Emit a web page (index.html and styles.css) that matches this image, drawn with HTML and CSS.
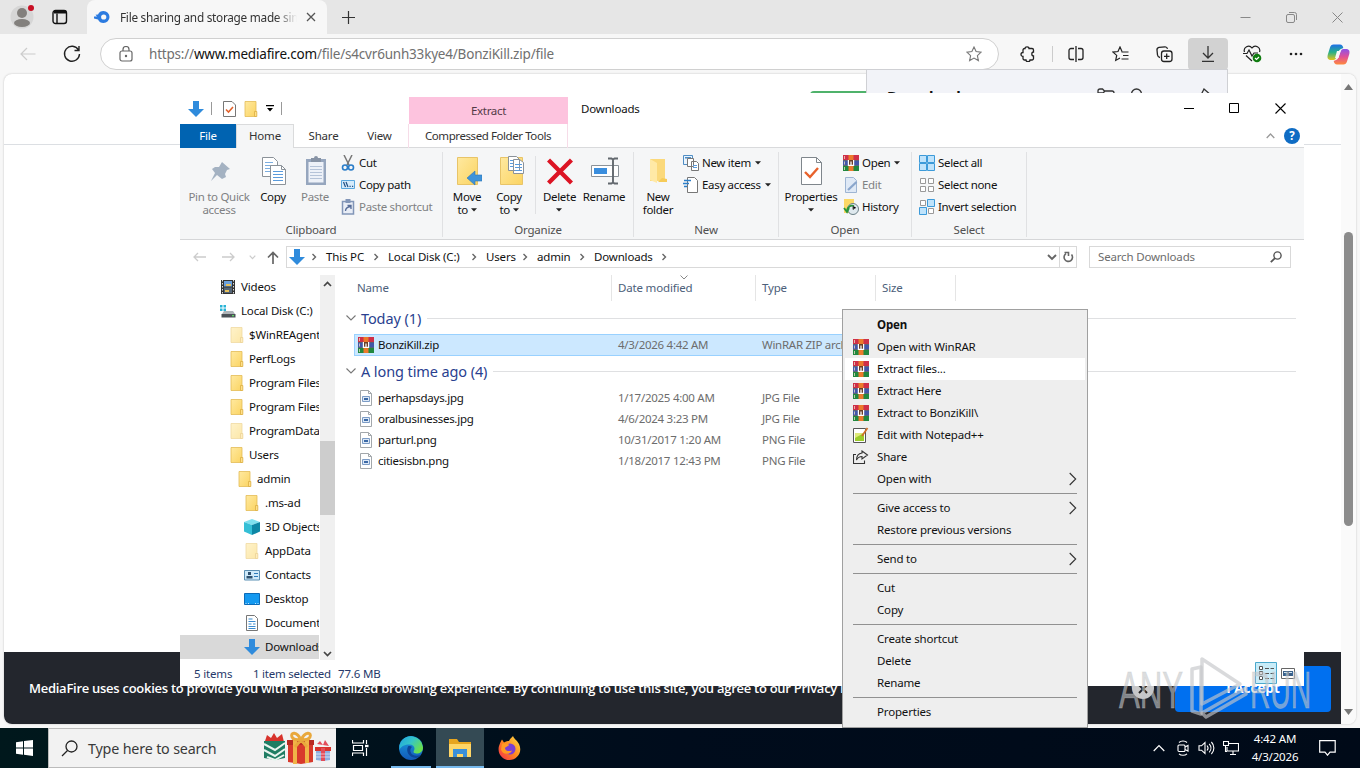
FILE: index.html
```
<!DOCTYPE html>
<html lang="en">
<head>
  <meta charset="UTF-8" />
  <meta name="viewport" content="width=device-width, initial-scale=1.0"/>
  <title>Downloads</title>
  <link rel="stylesheet" href="styles.css">
</head>
<body>

  <!-- shared icons -->
  <svg class="defs">
    <defs>
      <linearGradient id="gold" x1="0" y1="0" x2="1" y2="1"><stop offset="0" stop-color="#ffe9a0"/><stop offset="1" stop-color="#fbd462"/></linearGradient>
      <linearGradient id="edge1" x1="0" y1="0" x2="1" y2=".6"><stop offset="0" stop-color="#1fa3e0"/><stop offset=".5" stop-color="#35c5c8"/><stop offset="1" stop-color="#6be04a"/></linearGradient>
      <linearGradient id="edge2" x1="0" y1="0" x2="0" y2="1"><stop offset="0" stop-color="#1b9fe0"/><stop offset="1" stop-color="#1259b8"/></linearGradient>
      <linearGradient id="fox" x1="1" y1="0" x2="0" y2="1"><stop offset="0" stop-color="#ffe14a"/><stop offset=".5" stop-color="#ff8a1e"/><stop offset="1" stop-color="#f2274f"/></linearGradient>
      <linearGradient id="cop1" x1="0" y1="0" x2="0" y2="1"><stop offset="0" stop-color="#1d6fe8"/><stop offset=".5" stop-color="#27b089"/><stop offset="1" stop-color="#e5c41b"/></linearGradient>
      <linearGradient id="cop2" x1="0" y1="0" x2="0" y2="1"><stop offset="0" stop-color="#8c52e8"/><stop offset=".5" stop-color="#e05098"/><stop offset="1" stop-color="#ff8a3c"/></linearGradient>
    </defs>
    <symbol id="rar" viewBox="0 0 16 16">
      <path fill="#cf2f48" d="M0 0h16v5H0z"/><path fill="#4256a8" d="M0 5.500h16v5H0z"/><path fill="#21883f" d="M0 11h16v5H0z"/>
      <path fill="#222" d="M0 4.900h16v.6H0zM0 10.400h16v.6H0z"/>
      <path fill="#ec7a2c" d="M5.500 0h5v16h-5z"/><path fill="#6b3f28" d="M5 5h6v6H5z"/>
      <path fill="none" stroke="#fff" stroke-width="1.200" d="M5.400 5v5.300h5.200V5M8 6.500v3.500"/>
      <path stroke="#e9d8c0" d="M1.500 1v3M1.500 6.500v3M1.500 12v3" opacity=".8"/>
    </symbol>
    <symbol id="folder" viewBox="0 0 16 16">
      <path fill="url(#gold)" stroke="#e3bb55" stroke-width=".8" d="M2 .5h11v15H2z"/><path fill="#ffe08a" stroke="#dcae42" stroke-width=".8" d="M11.500 10.500h2.300v5h-2.300z"/>
    </symbol>
    <symbol id="down" viewBox="0 0 16 16"><path fill="#2f8bdc" d="M5 0h6v8h5l-8 8-8-8h5z"/></symbol>
    <symbol id="pic" viewBox="0 0 16 16">
      <path fill="#fff" stroke="#a2a7ab" d="M2.500.5h8l3 3v12h-11z"/><path fill="none" stroke="#a2a7ab" d="M10.500.5v3h3"/>
      <path fill="#dce8f6" stroke="#7c9cc6" d="M4.500 6.500h7v5h-7z"/><path fill="#3b69a6" d="M6 8h4v2H6z"/>
    </symbol>
    <symbol id="crumb" viewBox="0 0 6 8"><path fill="none" stroke="#666" stroke-width="1.400" d="M1.500 1l3 3-3 3"/></symbol>
    <symbol id="drop" viewBox="0 0 6 4"><path fill="#222" d="M0 .3h6L3 3.600z"/></symbol>
    <symbol id="more" viewBox="0 0 8 14"><path fill="none" stroke="#333" stroke-width="1.100" d="M.7 1l6 6-6 6"/></symbol>
  </svg>

  <div class="browser">
    <div class="tabstrip">
      <svg class="avatar" width="24" height="24" viewBox="0 0 24 24"><circle cx="12" cy="12" r="11.500" fill="#d6d6d6"/><circle cx="12" cy="8" r="5" fill="#83807d"/><ellipse cx="12" cy="18" rx="8" ry="4" fill="#83807d"/><circle cx="21" cy="3" r="3" fill="#c80f24"/></svg>
      <svg width="16" height="16" viewBox="0 0 16 16" fill="none" stroke="#111" stroke-width="1.400"><rect x="1" y="1.500" width="13.500" height="13" rx="2.500"/><path d="M5 4.500v10" /><path d="M2 3h12" stroke-width="3"/></svg>
      <div class="tab">
        <svg width="16" height="14" viewBox="0 0 16 14"><path fill="#2c7be0" d="M0 6.500h3L1.500 4.800 4 4.500C5 2 7 1 9.500 1a6 6 0 0 1 0 12C7 13 5 12 4 9.500L0 8.500z"/><circle cx="9.700" cy="7" r="2.600" fill="#f7f7f7"/></svg>
        <span class="tab-title">File sharing and storage made simple</span>
        <svg width="10" height="10" viewBox="0 0 10 10" stroke="#555" stroke-width="1.300"><path d="M1 1l8 8M9 1L1 9"/></svg>
      </div>
      <svg class="new-tab" width="15" height="15" viewBox="0 0 15 15" stroke="#333" stroke-width="1.200"><path d="M7.500 1v13M1 7.500h13"/></svg>
      <div class="win-buttons">
        <svg width="11" height="11" viewBox="0 0 11 11" stroke="#888"><path d="M.5 5.500h10"/></svg>
        <svg width="11" height="11" viewBox="0 0 11 11" fill="none" stroke="#888"><rect x=".5" y="2.500" width="8" height="8" rx="1.500"/><path d="M3 .5h5.500a2 2 0 0 1 2 2V8"/></svg>
        <svg width="11" height="11" viewBox="0 0 11 11" stroke="#888"><path d="M.5.5l10 10M10.500.5l-10 10"/></svg>
      </div>
    </div>

    <div class="toolbar">
      <svg class="back" width="16" height="14" viewBox="0 0 16 14" fill="none" stroke="#ccc" stroke-width="1.200"><path d="M15.500 7H1M7 1L1 7l6 6"/></svg>
      <svg class="reload" width="18" height="18" viewBox="0 0 18 18" fill="none" stroke="#222" stroke-width="1.400"><path d="M15.500 5A7.500 7.500 0 1 0 16.500 9M16 1v4.500h-4.500"/></svg>
      <div class="url">
        <svg width="14" height="16" viewBox="0 0 14 16" fill="none" stroke="#666" stroke-width="1.200"><rect x="1" y="5" width="12" height="10" rx="2"/><path d="M4 5V3.500a3 3 0 0 1 6 0V5"/><circle cx="7" cy="10" r=".6" fill="#666"/></svg>
        <span class="url-text">https://<b>www.mediafire.com</b>/file/s4cvr6unh33kye4/BonziKill.zip/file</span>
        <svg width="16" height="16" viewBox="0 0 16 16" fill="none" stroke="#777" stroke-width="1.100"><path d="M8 1l2.100 4.600 5 .6-3.700 3.400 1 5L8 12.100l-4.400 2.500 1-5L.9 6.200l5-.6z"/></svg>
      </div>
      <div class="tools">
        <span class="tool"><svg width="16" height="16" viewBox="0 0 16 16" fill="none" stroke="#222" stroke-width="1.300"><path d="M5 2.500a2 1.700 0 0 1 4 0h3a1.500 1.500 0 0 1 1.500 1.500v2a1.500 1.800 0 0 0 0 4v2.500a1.500 1.500 0 0 1-1.500 1.500H10a2 1.700 0 0 1-4 0H4.500A1.500 1.500 0 0 1 3 12.500v-2a2 2 0 0 1 0-4V4a1.500 1.500 0 0 1 1.500-1.500z"/></svg></span>
        <span class="tool-line"></span>
        <span class="tool"><svg width="16" height="16" viewBox="0 0 16 16" fill="none" stroke="#222" stroke-width="1.300"><path d="M6 2.500H3a2 2 0 0 0-2 2v7a2 2 0 0 0 2 2h3M10 2.500h3a2 2 0 0 1 2 2v7a2 2 0 0 1-2 2h-3M8 0v16"/></svg></span>
        <span class="tool"><svg width="17" height="16" viewBox="0 0 17 16" fill="none" stroke="#222" stroke-width="1.200"><path d="M10 5.500L8 1 6 5.500l-5 .6 3.700 3.300-1 5 4.300-2.500M9.500 6h7M11 9.500h5.500M9.500 13h7"/></svg></span>
        <span class="tool"><svg width="17" height="17" viewBox="0 0 17 17" fill="none" stroke="#222" stroke-width="1.300"><path d="M4 11.500A3 3 0 0 1 1.500 9L1 4a2.500 2.500 0 0 1 2-2.700L9 .8a2.500 2.500 0 0 1 2.500 2"/><rect x="5.500" y="5" width="10.500" height="10.500" rx="2.500"/><path d="M10.700 7.500v5.500M8 10.300h5.500"/></svg></span>
        <span class="tool active"><svg width="14" height="16" viewBox="0 0 14 16" fill="none" stroke="#333" stroke-width="1.300"><path d="M7 0v12M2 7l5 5 5-5M1 15.300h12"/></svg></span>
        <span class="tool"><svg width="19" height="18" viewBox="0 0 19 18" fill="none" stroke="#222" stroke-width="1.200"><path d="M1.500 7A4.300 4.300 0 0 1 9 3a4.300 4.300 0 0 1 7.500 4M0 8.500h4l2-3.500 3 6 2-3h4M3 10.500l6 5.500"/><circle cx="14" cy="13" r="4.300" fill="#107c10" stroke="none"/><path stroke="#fff" d="M12 13l1.500 1.500L16 12"/></svg></span>
        <span class="tool"><svg width="14" height="4" viewBox="0 0 14 4" fill="#222"><circle cx="2" cy="2" r="1.300"/><circle cx="7" cy="2" r="1.300"/><circle cx="12" cy="2" r="1.300"/></svg></span>
        <span class="tool copilot"><svg width="23" height="21" viewBox="0 0 23 21"><path fill="url(#cop2)" d="M16.500 20.500H10c-2 0-2.800-1.500-3.300-3.500l2.300-1c1.500-.5 2-1.500 2.500-3L13.500 8c.6-2 1.500-3 3-3h2c3.500 0 4.500 1.500 3.800 5l-2.300 7.500c-.6 2-1.700 3-3.500 3z"/><path fill="url(#cop1)" d="M6.500.5H13c2 0 2.800 1.500 3.300 3.500L14 5c-1.500.5-2 1.500-2.500 3l-2 5c-.6 2-1.500 3-3 3h-2C1 16 0 14.500.7 11L3 3.500c.6-2 1.700-3 3.500-3z"/><path fill="#f7f7f7" d="M10 7h3.500l-2 7H8z"/></svg></span>
      </div>
    </div>

    <div class="page">
      <div class="site">
        <div class="site-header"><div class="green-button"></div></div>
        <div class="site-body"></div>
        <div class="cookies">
          <p>MediaFire uses cookies to provide you with a personalized browsing experience. By continuing to use this site, you agree to our Privacy Policy.</p>
          <svg class="cookie-close" width="22" height="22" viewBox="0 0 22 22"><circle cx="11" cy="11" r="11" fill="#c9c9c9"/><path stroke="#222" stroke-width="2" d="M7 8l8 8M15 8l-8 8"/></svg>
          <span class="accept">I Accept</span>
        </div>
      </div>
      <div class="page-scroll">
        <svg width="9" height="6" viewBox="0 0 9 6"><path fill="#777" d="M4.500 0L9 6H0z"/></svg>
        <div class="page-thumb"></div>
        <svg width="9" height="6" viewBox="0 0 9 6"><path fill="#777" d="M4.500 6L9 0H0z"/></svg>
      </div>
    </div>
    <div class="flyout">
      <b>Downloads</b>
      <svg width="18" height="14" viewBox="0 0 18 14" fill="none" stroke="#333" stroke-width="1.300"><path d="M1 12V3a2 2 0 0 1 2-2h2.500L7.500 3H15a2 2 0 0 1 2 2M1 5h5l2-2"/></svg>
      <svg width="14" height="14" viewBox="0 0 14 14" fill="none" stroke="#333" stroke-width="1.300"><circle cx="6.500" cy="6" r="5"/><path d="M10 10l4 4"/></svg>
      <svg class="pin" width="14" height="14" viewBox="0 0 14 14" fill="none" stroke="#333" stroke-width="1.300"><path d="M2 7l3-6 8 7-4 4z"/></svg>
    </div>
  </div>

  <div class="taskbar">
    <div class="start"><svg width="17" height="16" viewBox="0 0 17 16" fill="#fff"><path d="M0 2.300l7-1v6.200H0zM8 1.100L17 0v7.500H8zM0 8.500h7v6.200l-7-1zM8 8.500h9V16l-9-1.200z"/></svg></div>
    <div class="task-search">
      <svg width="17" height="17" viewBox="0 0 17 17" fill="none" stroke="#222" stroke-width="1.300"><circle cx="10.500" cy="6.500" r="5.500"/><path d="M6.500 10.500L1 16"/></svg>
      <span>Type here to search</span>
      <svg class="gifts" width="68" height="34" viewBox="0 0 68 34">
        <path fill="#d8332c" d="M2 10l2-6 4 3 3-5 3 5 5-4 2 8z"/><path fill="#1f7d63" d="M1 10h21v17l-10 2-11-2z"/><path fill="none" stroke="#e9f4ef" stroke-width="2" d="M1 13l11 6 10-7M1 19l11 6 10-7M4 26l8 3 9-5"/>
        <path fill="#d8392c" d="M25 13h25v18l-12 2-13-2z"/><path fill="#b82a22" d="M24 9h27v5H24z"/><path fill="#f0b347" d="M30 9h4v24h-4zM42 9h4v23h-4z"/><path fill="none" stroke="#e9a83c" stroke-width="3" d="M38 9c-4-9-11-8-9-3 1 3 5 3 9 3 4-9 11-8 9-3-1 3-5 3-9 3l-6 7M38 9l6 7"/>
        <path fill="#8eaee0" d="M53 19h14v10l-7 1-7-1z"/><path fill="#d8332c" d="M52 16h16v4H52z"/><path fill="#e34d5a" d="M54 13l3-3 3 4 2-5 4 6zM58 17h4v13h-4z"/><path stroke="#fff" d="M53 23h14M53 26h14" opacity=".6"/>
      </svg>
    </div>
    <div class="task-item"><svg width="17" height="16" viewBox="0 0 17 16" fill="none" stroke="#fff" stroke-width="1.200"><path d="M.5 0v3h11V0M.5 16v-3h11v3M1.500 5.500h9v5h-9zM14.500 0v4M14.500 8v8"/><path d="M13 6h3.500" stroke-width="2.400"/></svg></div>
    <div class="task-item running edge"><svg width="24" height="24" viewBox="0 0 24 24"><circle cx="12" cy="12" r="12" fill="url(#edge2)"/><path fill="url(#edge1)" d="M.5 9A12 12 0 0 1 24 11.500c0 4-3 6-6.500 6-3 0-3.500-1.500-2.500-3 1.500-3-.5-6-4.500-6C6 8.500 2 10 .5 14z"/><path fill="#0d4597" d="M9 10.500c-2.500 5 1 11 8 11.500 2-.3 3.500-1.500 4.500-3-4 1.500-9 1-10-3.500-.4-2 .3-3.500 1.500-4.500-1-1-3-1.300-4-.5z"/></svg></div>
    <div class="task-item running open"><svg width="22" height="20" viewBox="0 0 22 20"><path fill="#e8a51e" d="M0 1h8l2 3h12v15H0z"/><path fill="#ffd667" d="M0 6h22v13H0z"/><path fill="#3b8fd8" d="M4 19v-8h14v8h-4v-3H8v3z"/></svg></div>
    <div class="task-item"><svg width="23" height="24" viewBox="0 0 23 24"><path fill="url(#fox)" d="M1 10C2 7 3 5 4 3.500l2 3C8 5 10 5 11 5c1-2 2.500-3.500 4-5 1 3 4 4 6 8 4 8-2 16-9.500 16S-1 17 1 10z"/><circle cx="12" cy="13" r="5.500" fill="#7a3fd4"/><path fill="#ff9a22" d="M4 8c3-2 5 0 7 .5 0 2-4 2-4 4 1 3 4 3 7 2-2 5-10 4-11-1z"/></svg></div>
    <div class="tray">
      <svg width="12" height="8" viewBox="0 0 12 8" fill="none" stroke="#fff" stroke-width="1.200"><path d="M.7 7L6 1.500 11.300 7"/></svg>
      <svg width="12" height="16" viewBox="0 0 12 16" fill="none" stroke="#fff" stroke-width="1.100"><rect x="1" y="5" width="7" height="6.500" rx="1"/><path d="M8 7l3-1.500v5.500L8 9.500M2 2.500C4 .5 8 .5 10 2.500M2 13.800c2 2 6 2 8 0"/></svg>
      <svg width="17" height="14" viewBox="0 0 17 14" fill="none" stroke="#fff" stroke-width="1.100"><path d="M1 4.800h2.500L7 1.500v11L3.500 9.200H1zM9 4.500c1.300 1.500 1.300 3.500 0 5M11.200 2.800c2.300 2.500 2.300 6 0 8.500M13.400 1c3.300 3.500 3.300 8.500 0 12"/></svg>
      <svg width="16" height="14" viewBox="0 0 16 14" fill="none" stroke="#fff" stroke-width="1.100"><path d="M6 2.500h9.500v7.500H4V6M7 13.500h6M10 10v3.500M.5.500h5v4h-5zM2.500 5v5.500H4"/></svg>
    </div>
    <div class="clock"><span>4:42 AM</span><span>4/3/2026</span></div>
    <svg class="notify" width="17" height="16" viewBox="0 0 17 16" fill="none" stroke="#fff" stroke-width="1.200"><path d="M.7.7h15.500v11.500H11l-2.500 3-2.500-3H.7z"/></svg>
  </div>

  <div class="explorer">
    <div class="titlebar">
      <div class="quick">
        <svg width="16" height="16"><use href="#down"/></svg>
        <i></i>
        <svg class="q-check" width="13" height="16" viewBox="0 0 13 16"><path fill="#fff" stroke="#777" d="M.5.5H9L12.500 4v11.500H.5z"/><path fill="none" stroke="#e2622c" stroke-width="1.600" d="M3 8.500L5.500 11 10 6"/></svg>
        <svg width="16" height="16"><use href="#folder"/></svg>
        <svg class="q-drop" width="8" height="7" viewBox="0 0 8 7"><path d="M0 0h8v1.200H0zM1 3h6L4 6.500z"/></svg>
        <i></i>
      </div>
      <div class="extract">Extract</div>
      <div class="title">Downloads</div>
      <div class="caption">
        <svg width="11" height="11" viewBox="0 0 11 11" stroke="#000"><path d="M0 5.500h10"/></svg>
        <svg width="11" height="11" viewBox="0 0 11 11" stroke="#000" fill="none"><path d="M.5.5h9v9h-9z"/></svg>
        <svg width="11" height="11" viewBox="0 0 11 11" stroke="#000" stroke-width="1.100"><path d="M.5.500l10 10M10.500.5l-10 10"/></svg>
      </div>
    </div>

    <div class="ribbon-tabs">
      <span class="rtab file">File</span>
      <span class="rtab home">Home</span>
      <span class="rtab share">Share</span>
      <span class="rtab view">View</span>
      <span class="rtab tools-tab">Compressed Folder Tools</span>
      <svg class="collapse" width="9" height="6" viewBox="0 0 9 6" fill="none" stroke="#999" stroke-width="1.300"><path d="M.7 5l3.800-4 3.800 4"/></svg>
      <span class="help">?</span>
    </div>

    <div class="ribbon">
      <div class="group clipboard">
        <div class="group-body">
          <div class="big off pin-btn">
            <svg width="26" height="30" viewBox="0 0 26 30"><path fill="#a4b2c2" d="M15 6l8 7-3 1-2 4 1 3-4 2-5-4-6 6 4-8-3-4 3-2 4 0z"/></svg>
            <span>Pin to Quick<br>access</span>
          </div>
          <div class="big copy-btn">
            <svg width="26" height="30" viewBox="0 0 26 30"><path fill="#fff" stroke="#8b9299" d="M1.500 1.500h11l4 4v15h-15z"/><path stroke="#7caee0" d="M4 6.500h8M4 9.500h8M4 12.500h8M4 15.500h8"/><path fill="#fff" stroke="#8b9299" d="M9.500 9.500h11l4 4v15h-15z"/><path fill="none" stroke="#8b9299" d="M20.500 9.500v4h4"/><path stroke="#5a9bdc" d="M12 15.500h10M12 18.500h10M12 21.500h10M12 24.500h10"/></svg>
            <span>Copy</span>
          </div>
          <div class="big off paste-btn">
            <svg width="22" height="30" viewBox="0 0 22 30"><path fill="#96a6be" d="M1 3h20v26H1z"/><path fill="#edf1f8" d="M3.500 6h15v20.500h-15z"/><path fill="#8793a5" d="M6 2h3a2 2 0 0 1 4 0h3v4H6z"/><path stroke="#b5c3d8" d="M5 10.500h12M5 13.500h12M5 16.500h12M5 19.500h12M5 22.500h12"/></svg>
            <span>Paste</span>
          </div>
          <div class="smalls">
            <div class="small"><svg width="14" height="16" viewBox="0 0 14 16" fill="none"><path stroke="#777" stroke-width="1.500" d="M3 0l5 10M11 0L6 10"/><circle cx="4" cy="12.500" r="2.500" stroke="#2a7dc8" stroke-width="1.600"/><circle cx="10" cy="12.500" r="2.500" stroke="#2a7dc8" stroke-width="1.600"/></svg><span>Cut</span></div>
            <div class="small"><svg width="14" height="16" viewBox="0 0 14 16"><path fill="#d5ebfb" stroke="#5aa7de" d="M.5 3.500h13v8H.5z"/><path stroke="#1f4e84" stroke-width="1.200" d="M2.500 5l2 5M5 5l2 5M8.500 9.400h1.200M11 9.400h1.200"/></svg><span>Copy path</span></div>
            <div class="small off"><svg width="14" height="16" viewBox="0 0 14 16"><path fill="#e8edf6" stroke="#8296b8" stroke-width="1.500" d="M1.500 2.500h11v12.500h-11z"/><path fill="#8296b8" d="M4.500 0h5v4h-5z"/><path fill="none" stroke="#566c98" stroke-width="1.300" d="M4.500 12c0-3 2-4 5-4.500M6.500 6.500h3.500V10"/></svg><span>Paste shortcut</span></div>
          </div>
        </div>
        <div class="group-name">Clipboard</div>
      </div>

      <div class="group organize">
        <div class="group-body">
          <div class="big move-btn">
            <svg width="28" height="30" viewBox="0 0 28 30"><path fill="url(#gold)" stroke="#e8c468" d="M3.500 1.500h20v27h-20z"/><path fill="#3f93d9" stroke="#2c76b8" stroke-width=".6" d="M13 22l8-7v4h7v6h-7v4z"/></svg>
            <span>Move<br>to <svg width="6" height="4"><use href="#drop"/></svg></span>
          </div>
          <div class="big move-btn">
            <svg width="28" height="30" viewBox="0 0 28 30"><path fill="url(#gold)" stroke="#e8c468" d="M4.500 1.500h22v27h-22z"/><path fill="#fff" stroke="#8b9299" d="M12.500.5h8l3 3v11h-11zM17.500 3.500h6l4 3v11h-10z"/><path stroke="#5a9bdc" d="M19 8.500h7M19 11.500h7M19 14.500h7M14 4.500h3M14 7.500h3M14 10.500h3"/></svg>
            <span>Copy<br>to <svg width="6" height="4"><use href="#drop"/></svg></span>
          </div>
          <i class="inner-line"></i>
          <div class="big delete-btn">
            <svg width="26" height="30" viewBox="0 0 26 30"><path stroke="#dc1424" stroke-width="4.400" d="M1.500 4l23 23M24.500 4l-23 23"/></svg>
            <span>Delete<br><svg width="6" height="4"><use href="#drop"/></svg></span>
          </div>
          <div class="big rename-btn">
            <svg width="30" height="30" viewBox="0 0 30 30"><path fill="#fff" stroke="#8b9299" d="M1.500 9.500h27v11h-27z"/><path fill="#3a8ede" d="M4 12h13v6H4z"/><path fill="none" stroke="#62686e" stroke-width="1.900" d="M18 2.500h3.500l1.500 1 1.500-1H28M18 27.500h3.500l1.500-1 1.500 1H28M23 3v24"/></svg>
            <span>Rename</span>
          </div>
        </div>
        <div class="group-name">Organize</div>
      </div>

      <div class="group new">
        <div class="group-body">
          <div class="big move-btn">
            <svg width="22" height="30" viewBox="0 0 22 30"><path fill="#fbd97b" d="M2 3h15v22H2z"/><path fill="#ffe9a6" d="M2 3l7 4v20l-7-3z"/><path fill="#f6cb58" d="M14 22l5 1v3h-9z"/></svg>
            <span>New<br>folder</span>
          </div>
          <div class="smalls">
            <div class="small"><svg width="16" height="16" viewBox="0 0 16 16"><path fill="#eaf4fd" stroke="#4f8dc4" d="M.5.5h9v9h-9z"/><path fill="#4f8dc4" d="M2 2h6v1.500H2z"/><path fill="#fff" stroke="#777" d="M4.500 3.500h6v8h-6zM8.500 6.500h5l2 2v7h-7z"/><path stroke="#5a9bdc" d="M10 10.500h4M10 12.500h4"/></svg><span>New item</span><svg class="arrow" width="6" height="4"><use href="#drop"/></svg></div>
            <div class="small"><svg width="16" height="16" viewBox="0 0 16 16"><path fill="#fff" stroke="#777" d="M4.500.5h7l3 3v12h-10z"/><path stroke="#2c7fc9" stroke-width="1.300" d="M1 3.500h7M0 6.500h6M1 9.500h3"/></svg><span>Easy access</span><svg class="arrow" width="6" height="4"><use href="#drop"/></svg></div>
          </div>
        </div>
        <div class="group-name">New</div>
      </div>

      <div class="group opening">
        <div class="group-body">
          <div class="big prop-btn">
            <svg width="22" height="30" viewBox="0 0 22 30"><path fill="#fff" stroke="#7f868c" d="M.5 1.500h15l5 5v22H.5z"/><path fill="none" stroke="#7f868c" d="M15.500 1.500v5h5"/><path fill="none" stroke="#e8622c" stroke-width="2.400" d="M4 16l5 5 8-9"/></svg>
            <span>Properties<br><svg width="6" height="4"><use href="#drop"/></svg></span>
          </div>
          <div class="smalls">
            <div class="small"><svg width="16" height="16"><use href="#rar"/></svg><span>Open</span><svg class="arrow" width="6" height="4"><use href="#drop"/></svg></div>
            <div class="small off"><svg width="16" height="16" viewBox="0 0 16 16"><path fill="#dfe9f6" stroke="#9eb5d3" d="M2.500.5h8l3 3v12h-11z"/><path stroke="#8aa6cc" stroke-width="2.200" d="M5 13l8.500-8"/></svg><span>Edit</span></div>
            <div class="small"><svg width="16" height="16" viewBox="0 0 16 16"><path fill="#fbd866" d="M1 0h10v14H1z"/><circle cx="10" cy="10" r="5.500" fill="#dfe9ee" stroke="#6a7f86"/><path fill="none" stroke="#28953a" stroke-width="1.800" d="M1 9l3 4 2-4M4 12c1-5 4-6 7-5"/><path stroke="#555" d="M10 7v3.500l3-2"/></svg><span>History</span></div>
          </div>
        </div>
        <div class="group-name">Open</div>
      </div>

      <div class="group selecting">
        <div class="group-body">
          <div class="smalls">
            <div class="small"><svg width="16" height="16" viewBox="0 0 16 16" fill="#bfe3fb" stroke="#3c9ad9"><path d="M.5.5h7v7h-7zM8.500.5h7v7h-7zM.5 8.500h7v7h-7zM8.500 8.500h7v7h-7z"/></svg><span>Select all</span></div>
            <div class="small"><svg width="16" height="16" viewBox="0 0 16 16" fill="#fff" stroke="#999"><path d="M1.500 1.500h5v5h-5zM9.500 1.500h5v5h-5zM1.500 9.500h5v5h-5zM9.500 9.500h5v5h-5z"/></svg><span>Select none</span></div>
            <div class="small"><svg width="16" height="16" viewBox="0 0 16 16"><path fill="#fff" stroke="#999" d="M1.500 1.500h5v5h-5zM9.500 9.500h5v5h-5z"/><path fill="#bfe3fb" stroke="#3c9ad9" d="M8.500.5h7v7h-7zM.5 8.500h7v7h-7z"/></svg><span>Invert selection</span></div>
          </div>
        </div>
        <div class="group-name">Select</div>
      </div>
    </div>

    <div class="address-row">
      <div class="nav-arrows">
        <svg width="13" height="10" viewBox="0 0 13 10" fill="none" stroke="#ccc" stroke-width="1.300"><path d="M13 5H1M5 1L1 5l4 4"/></svg>
        <svg width="13" height="10" viewBox="0 0 13 10" fill="none" stroke="#ccc" stroke-width="1.300"><path d="M0 5h12M8 1l4 4-4 4"/></svg>
        <svg width="7" height="5" viewBox="0 0 7 5" fill="none" stroke="#ccc" stroke-width="1.200"><path d="M.7.7l2.800 3L6.300.7"/></svg>
        <svg width="12" height="13" viewBox="0 0 12 13" fill="none" stroke="#666" stroke-width="1.700"><path d="M6 13V1.500M1 6.500l5-5 5 5"/></svg>
      </div>
      <div class="address">
        <svg class="addr-icon" width="16" height="16"><use href="#down"/></svg>
        <svg width="6" height="8"><use href="#crumb"/></svg><span class="c1">This PC</span>
        <svg width="6" height="8"><use href="#crumb"/></svg><span class="c2">Local Disk (C:)</span>
        <svg width="6" height="8"><use href="#crumb"/></svg><span class="c3">Users</span>
        <svg width="6" height="8"><use href="#crumb"/></svg><span class="c4">admin</span>
        <svg width="6" height="8"><use href="#crumb"/></svg><span class="c5">Downloads</span>
        <svg width="6" height="8"><use href="#crumb"/></svg>
        <svg class="addr-drop" width="10" height="7" viewBox="0 0 10 7" fill="none" stroke="#666" stroke-width="1.900"><path d="M1 1l4 4 4-4"/></svg>
        <div class="refresh"><svg width="11" height="12" viewBox="0 0 11 12" fill="none" stroke="#666" stroke-width="1.600"><path d="M3 2.700A4.200 4.200 0 1 0 8.500 3.500M1.500 1.500h4V5"/></svg></div>
      </div>
      <div class="search"><span>Search Downloads</span><svg width="12" height="12" viewBox="0 0 12 12" fill="none" stroke="#555" stroke-width="1.400"><circle cx="7.500" cy="4.500" r="3.600"/><path d="M5 7.200L.8 11.200" stroke-width="1.800"/></svg></div>
    </div>

    <div class="content">
      <div class="tree">
        <div class="tree-list">
          <div class="node l1"><svg width="16" height="16" viewBox="0 0 16 16"><path fill="#333" d="M1 1h14v14H1z"/><path fill="#6ba0dc" d="M4 2h8v5.500H4z"/><path fill="#567" d="M4 8.500h8V14H4z"/><path fill="#e7c05c" d="M6 5h5v2H6zM5 11h4v2H5z"/><path stroke="#ddd" stroke-dasharray="1.500 1.500" d="M2.500 1v14M13.500 1v14"/></svg><span>Videos</span></div>
          <div class="node l1"><svg width="16" height="16" viewBox="0 0 16 16"><path fill="#28b3d6" d="M0 2h2.500v2.500H0zM3.500 2H6v2.500H3.500zM0 5.500h2.500V8H0zM3.500 5.500H6V8H3.500z"/><path fill="#aeb4b8" d="M4 8h9l2 3H2z"/><path fill="#4b5257" d="M1.500 11h14v3.500h-14z"/><path fill="#6f6" d="M12 12.300h2v1h-2z"/></svg><span>Local Disk (C:)</span></div>
          <div class="node l2 faded"><svg width="16" height="16"><use href="#folder"/></svg><span>$WinREAgent</span></div>
          <div class="node l2"><svg width="16" height="16"><use href="#folder"/></svg><span>PerfLogs</span></div>
          <div class="node l2"><svg width="16" height="16"><use href="#folder"/></svg><span>Program Files</span></div>
          <div class="node l2"><svg width="16" height="16"><use href="#folder"/></svg><span>Program Files (x86)</span></div>
          <div class="node l2 faded"><svg width="16" height="16"><use href="#folder"/></svg><span>ProgramData</span></div>
          <div class="node l2"><svg width="16" height="16"><use href="#folder"/></svg><span>Users</span></div>
          <div class="node l3"><svg width="16" height="16"><use href="#folder"/></svg><span>admin</span></div>
          <div class="node l4"><svg width="16" height="16"><use href="#folder"/></svg><span>.ms-ad</span></div>
          <div class="node l4"><svg width="16" height="16" viewBox="0 0 16 16"><path fill="#7fe0ee" d="M8 0l8 3-8 3-8-3z"/><path fill="#35bfd6" d="M0 3l8 3v10l-8-3.500z"/><path fill="#0e87a5" d="M16 3L8 6v10l8-3.500z"/></svg><span>3D Objects</span></div>
          <div class="node l4 faded"><svg width="16" height="16"><use href="#folder"/></svg><span>AppData</span></div>
          <div class="node l4"><svg width="16" height="16" viewBox="0 0 16 16"><path fill="#cfeafa" stroke="#5b8fb3" d="M.5 3.500h15v9.500H.5z"/><path fill="#2f5270" d="M4 5h3v3H4zM2.500 9h6v2.500h-6z"/><path stroke="#2d7bbb" d="M10 6.500h4M10 9.500h4"/></svg><span>Contacts</span></div>
          <div class="node l4"><svg width="16" height="16" viewBox="0 0 16 16"><path fill="#1499f0" stroke="#0b6bb8" d="M.5 2.500h15v11H.5z"/><path stroke="#bfe3fb" stroke-dasharray="1 1.500" d="M1.500 12.500h4M11 12.500h4"/></svg><span>Desktop</span></div>
          <div class="node l4"><svg width="16" height="16" viewBox="0 0 16 16"><path fill="#fff" stroke="#777" d="M2.500.5h8l3 3v12h-11z"/><path stroke="#3b8bd0" stroke-width="1.200" d="M4.500 4h4M4.500 6.500h7M4.500 9h3M9 9h2.500M4.500 11.500h7M4.500 13.500h7"/></svg><span>Documents</span></div>
          <div class="node l4 current"><svg width="16" height="16"><use href="#down"/></svg><span>Downloads</span></div>
        </div>
        <div class="tree-scroll">
          <svg width="9" height="6" viewBox="0 0 9 6" fill="none" stroke="#444" stroke-width="1.700"><path d="M1 5l3.500-3.500L8 5"/></svg>
          <div class="tree-thumb"></div>
          <svg width="9" height="6" viewBox="0 0 9 6" fill="none" stroke="#444" stroke-width="1.700"><path d="M1 1l3.500 3.500L8 1"/></svg>
        </div>
      </div>

      <div class="files">
        <div class="columns">
          <span class="col name">Name</span>
          <span class="col date">Date modified<svg class="sort" width="8" height="5" viewBox="0 0 8 5" fill="none" stroke="#888"><path d="M.5.5L4 4 7.500.5"/></svg></span>
          <span class="col type">Type</span>
          <span class="col size">Size</span>
        </div>
        <div class="heading first"><svg width="10" height="6" viewBox="0 0 10 6" fill="none" stroke="#777" stroke-width="1.100"><path d="M.5.5L5 5 9.500.5"/></svg><span>Today (1)</span><hr></div>
        <div class="row selected"><svg width="16" height="16"><use href="#rar"/></svg><span class="fname">BonziKill.zip</span><span class="fdate">4/3/2026 4:42 AM</span><span class="ftype">WinRAR ZIP archive</span></div>
        <div class="heading second"><svg width="10" height="6" viewBox="0 0 10 6" fill="none" stroke="#777" stroke-width="1.100"><path d="M.5.5L5 5 9.500.5"/></svg><span>A long time ago (4)</span><hr></div>
        <div class="row"><svg width="16" height="16"><use href="#pic"/></svg><span class="fname">perhapsdays.jpg</span><span class="fdate">1/17/2025 4:00 AM</span><span class="ftype">JPG File</span></div>
        <div class="row"><svg width="16" height="16"><use href="#pic"/></svg><span class="fname">oralbusinesses.jpg</span><span class="fdate">4/6/2024 3:23 PM</span><span class="ftype">JPG File</span></div>
        <div class="row"><svg width="16" height="16"><use href="#pic"/></svg><span class="fname">parturl.png</span><span class="fdate">10/31/2017 1:20 AM</span><span class="ftype">PNG File</span></div>
        <div class="row"><svg width="16" height="16"><use href="#pic"/></svg><span class="fname">citiesisbn.png</span><span class="fdate">1/18/2017 12:43 PM</span><span class="ftype">PNG File</span></div>
      </div>
    </div>

    <div class="status">
      <span class="count">5 items</span><span class="picked">1 item selected</span><span>77.6 MB</span>
      <span class="view-modes">
        <svg width="22" height="22" viewBox="0 0 22 22"><path fill="#c9ecf8" stroke="#4aa8cc" d="M.5.5h21v21H.5z"/><path fill="#fff" stroke="#555" d="M4.500 4.500h3v3h-3zM4.500 9.500h3v3h-3zM4.500 14.500h3v3h-3z"/><path stroke="#555" stroke-dasharray="4 1.500" d="M10 6.500h9M10 11.500h9M10 16.500h9"/></svg>
        <svg width="14" height="11" viewBox="0 0 14 11"><path fill="#fff" stroke="#666" d="M.5.5h13v10H.5z"/><path fill="#3b5f86" d="M2 3h10v5H2z"/><path stroke="#cfe6f5" d="M3 4.500h3M8 4.500h3"/></svg>
      </span>
    </div>
  </div>

  <div class="menu">
    <div class="item bold"><span>Open</span></div>
    <div class="item"><svg width="16" height="16"><use href="#rar"/></svg><span>Open with WinRAR</span></div>
    <div class="item hover"><svg width="16" height="16"><use href="#rar"/></svg><span>Extract files...</span></div>
    <div class="item"><svg width="16" height="16"><use href="#rar"/></svg><span>Extract Here</span></div>
    <div class="item"><svg width="16" height="16"><use href="#rar"/></svg><span>Extract to BonziKill\</span></div>
    <div class="item"><svg width="16" height="16" viewBox="0 0 16 16"><path fill="#fff" stroke="#555" d="M.5 1.500h12v14H.5z"/><path fill="#9ccc2c" d="M2 6h9v8H2z"/><path fill="#dfe97a" d="M2 6h9L2 11z"/><path stroke="#555" stroke-dasharray="1 1" d="M1 1.500h11"/><path stroke="#d0702a" stroke-width="1.800" d="M9 9l5.500-8"/></svg><span>Edit with Notepad++</span></div>
    <div class="item"><svg width="16" height="16" viewBox="0 0 16 16" fill="none" stroke="#333" stroke-width="1.100"><path d="M3 5.500H.5v9h11v-3M9 2l5.500 4L9 10V7.500C6 7.500 4.500 9 3.500 11c0-4 2-6.500 5.500-7z"/></svg><span>Share</span></div>
    <div class="item"><span>Open with</span><svg class="more" width="8" height="14"><use href="#more"/></svg></div>
    <hr>
    <div class="item"><span>Give access to</span><svg class="more" width="8" height="14"><use href="#more"/></svg></div>
    <div class="item"><span>Restore previous versions</span></div>
    <hr>
    <div class="item"><span>Send to</span><svg class="more" width="8" height="14"><use href="#more"/></svg></div>
    <hr>
    <div class="item"><span>Cut</span></div>
    <div class="item"><span>Copy</span></div>
    <hr>
    <div class="item"><span>Create shortcut</span></div>
    <div class="item"><span>Delete</span></div>
    <div class="item"><span>Rename</span></div>
    <hr>
    <div class="item"><span>Properties</span></div>
  </div>

  <svg class="watermark" width="196" height="66" viewBox="0 0 196 66">
    <g font-size="51" font-family="Liberation Sans Narrow, Liberation Sans, sans-serif" fill="#c4c6c9" fill-opacity=".6" stroke="#c4c6c9" stroke-opacity=".35">
      <text x="1" y="53" textLength="64" lengthAdjust="spacingAndGlyphs">ANY</text>
      <text x="132" y="53" textLength="61" lengthAdjust="spacingAndGlyphs">RUN</text>
    </g>
    <g fill="none" stroke="#c4c6c9" stroke-opacity=".65" stroke-width="3.500" stroke-linejoin="round">
      <path d="M74 14v42l9 3V12z"/><path d="M84 4v45l38-20z"/><path d="M84 58l44-25v6L88 62z"/>
    </g>
  </svg>

</body>
</html>
```
FILE: styles.css
```
* {
  box-sizing: border-box;
}
body {
  margin: 0;
  width: 1360px;
  height: 768px;
  overflow: hidden;
  position: relative;
  font-family: "Noto Sans", sans-serif;
  font-size: 11.5px;
  letter-spacing: -0.17px;
  color: #111;
  background: #f7f7f7;
}
svg {
  flex: none;
  display: block;
}
.defs {
  position: absolute;
  width: 0;
  height: 0;
}

/* browser */
.browser {
  height: 728px;
  display: flex;
  flex-direction: column;
}
.tabstrip {
  height: 34px;
  background: #e6e6e6;
  display: flex;
  align-items: center;
  padding-left: 10px;
}
.avatar {
  margin-right: 18px;
  overflow: visible;
}
.tab {
  width: 240px;
  height: 34px;
  margin-left: 19px;
  padding: 0 11px 0 7px;
  background: #f7f7f7;
  border-radius: 8px 8px 0 0;
  display: flex;
  align-items: center;
}
.tab-title {
  width: 178px;
  margin: 0 9px 0 10px;
  padding-bottom: 1px;
  font-size: 11.8px;
  letter-spacing: -0.27px;
  white-space: nowrap;
  overflow: hidden;
  color: #333;
  -webkit-mask-image: linear-gradient(90deg, #000 88%, transparent);
  mask-image: linear-gradient(90deg, #000 88%, transparent);
}
.new-tab {
  margin-left: 14px;
}
.win-buttons {
  margin-left: auto;
  display: flex;
  gap: 35px;
  padding-right: 17px;
}
.toolbar {
  height: 40px;
  display: flex;
  align-items: center;
  padding-left: 20px;
}
.reload {
  margin-left: 27px;
}
.url {
  width: 899px;
  height: 32px;
  margin-left: 19px;
  padding: 0 16px 0 18px;
  background: #fff;
  border: 1px solid #d0d0d0;
  border-radius: 16px;
  display: flex;
  align-items: center;
}
.url-text {
  flex: 1;
  margin-left: 16px;
  font-size: 13.5px;
  letter-spacing: -0.2px;
  color: #707070;
}
.url-text b {
  font-weight: normal;
  color: #111;
}
.tools {
  flex: 1;
  display: flex;
  align-items: center;
  padding-left: 9px;
}
.tool {
  width: 40px;
  height: 32px;
  margin-right: 4px;
  display: flex;
  align-items: center;
  justify-content: center;
  border-radius: 4px;
}
.tool-line {
  width: 1px;
  height: 16px;
  margin: 0 3px 0 0;
  background: #ccc;
}
.tool.active {
  background: #d2d2d2;
}
.tool.copilot {
  width: 36px;
}
.page {
  flex: 1;
  margin: 0 4px 4px;
  display: flex;
  background: #fff;
  border-radius: 8px;
  box-shadow: 0 0 2px #bbb;
  overflow: hidden;
}
.site {
  width: 1337px;
  display: flex;
  flex-direction: column;
}
.site-header {
  height: 71px;
  border-bottom: 1px solid #dcdfe3;
  padding: 17px 0 0 806px;
}
.green-button {
  width: 80px;
  height: 36px;
  border-radius: 4px;
  background: #4fb26b;
}
.site-body {
  flex: 1;
}
.cookies {
  height: 72px;
  padding: 0 10px 0 25px;
  background: #23262d;
  border-radius: 0 0 0 6px;
  color: #fff;
  display: flex;
  align-items: center;
  font-family: "Open Sans", sans-serif;
}
.cookies p {
  width: 1103px;
  margin: 0;
  font-size: 13px;
  font-weight: 600;
  letter-spacing: -0.27px;
  white-space: nowrap;
}
.cookie-close {
  margin-right: 21px;
}
.accept {
  width: 156px;
  height: 46px;
  margin-top: 2px;
  border-radius: 4px;
  background: #0070f0;
  text-align: center;
  line-height: 45px;
  font-size: 13.5px;
  letter-spacing: 0;
  font-weight: 700;
}
.page-scroll {
  width: 15px;
  display: flex;
  flex-direction: column;
  align-items: center;
  padding: 10px 0 9px;
  background: #fafafa;
}
.page-thumb {
  width: 9px;
  height: 294px;
  margin: 142px 0 auto;
  border-radius: 5px;
  background: #8b8b8b;
}
.flyout {
  position: absolute;
  left: 866px;
  top: 69px;
  width: 362px;
  height: 60px;
  padding: 18px 14px 0 20px;
  background: #f2f3f8;
  border: 1px solid #cfd0d4;
  display: flex;
  gap: 15px;
}
.flyout b {
  width: 195px;
  margin-top: -2px;
  font-size: 15px;
  line-height: 20px;
}
.flyout .pin {
  margin-left: 40px;
}

/* taskbar */
.taskbar {
  height: 40px;
  display: flex;
  align-items: center;
  background: linear-gradient(90deg, #00181c, #000c1c 50%, #000a18);
  color: #fff;
}
.start {
  width: 48px;
  padding-left: 16px;
}
.task-search {
  width: 288px;
  height: 40px;
  padding: 0 5px 0 12px;
  background: #f2f2f2;
  border: 1px solid #bbb;
  border-right: 0;
  display: flex;
  align-items: center;
  color: #3a3a3a;
  font-size: 14.3px;
}
.task-search span {
  flex: 1;
  margin-left: 10px;
}
.task-item {
  width: 48px;
  height: 40px;
  margin-right: 1px;
  display: flex;
  align-items: center;
  justify-content: center;
  position: relative;
}
.task-item.edge {
  margin-left: 2px;
}
.task-item.running::after {
  content: "";
  position: absolute;
  left: 4px;
  right: 4px;
  bottom: 0;
  height: 2px;
  background: #76b9ed;
}
.task-item.open {
  background: #344a54;
}
.task-item.open::after {
  left: 0;
  right: 0;
}
.tray {
  margin-left: auto;
  display: flex;
  align-items: center;
  gap: 10px;
}
.tray svg:nth-child(2) {
  margin-left: 2px;
}
.tray svg:nth-child(3) {
  margin-left: -1px;
}
.tray svg:nth-child(4) {
  margin-left: -2px;
}
.clock {
  width: 72px;
  display: flex;
  flex-direction: column;
  align-items: center;
  line-height: 18px;
}
.notify {
  margin: 0 24px 0 8px;
}

/* explorer */
.explorer {
  position: absolute;
  left: 180px;
  top: 93px;
  width: 1124px;
  height: 593px;
  background: #fff;
  display: flex;
  flex-direction: column;
}
.titlebar {
  height: 31px;
  display: flex;
}
.quick {
  width: 229px;
  display: flex;
  align-items: center;
  padding-left: 8px;
}
.quick i {
  width: 1px;
  height: 13px;
  margin-left: 7px;
  background: #999;
}
.q-check {
  margin: 0 7px 0 11px;
}
.q-drop {
  margin: 0 0 0 7px;
}
.extract {
  width: 159px;
  height: 27px;
  margin-top: 4px;
  background: #fdc3de;
  text-align: center;
  line-height: 28px;
  letter-spacing: -0.3px;
  color: #533a46;
}
.title {
  margin-left: 13px;
  line-height: 32px;
}
.caption {
  margin-left: auto;
  padding: 10px 18px 0 0;
  display: flex;
  gap: 35px;
}
.caption svg:first-child {
  margin-right: -1px;
}
.ribbon-tabs {
  height: 24px;
  display: flex;
  align-items: center;
  border-bottom: 1px solid #d9dadc;
}
.rtab {
  height: 24px;
  line-height: 24px;
  text-align: center;
  color: #333;
}
.rtab.file {
  width: 56px;
  background: #0063b1;
  color: #fff;
}
.rtab.home {
  width: 58px;
  background: #f5f6f7;
  border: 1px solid #dadbdc;
  border-bottom: 0;
  line-height: 22px;
}
.rtab.share {
  width: 59px;
}
.rtab.view {
  width: 53px;
}
.rtab.tools-tab {
  width: 160px;
  margin-left: 2px;
  border: solid #f6dce8;
  border-width: 0 1px;
  letter-spacing: -0.42px;
}
.collapse {
  margin-left: auto;
}
.help {
  width: 16px;
  height: 16px;
  margin: 0 4px 0 9px;
  border-radius: 8px;
  background: #0f6cc4;
  color: #fff;
  font-weight: bold;
  text-align: center;
  line-height: 16px;
}
.ribbon {
  height: 92px;
  padding-top: 4px;
  display: flex;
  background: #f5f6f7;
  border-bottom: 1px solid #d5d6d8;
}
.group {
  height: 85px;
  border-right: 1px solid #e0e1e3;
}
.group-body {
  height: 69px;
  display: flex;
}
.group-name {
  text-align: center;
  line-height: 18px;
  color: #505050;
}
.clipboard {
  width: 263px;
}
.clipboard .group-body {
  padding-left: 4px;
}
.organize {
  width: 191px;
}
.organize .group-body {
  padding-left: 3px;
}
.new {
  width: 145px;
}
.new .group-body {
  padding-left: 3px;
}
.opening {
  width: 133px;
}
.opening .group-body {
  padding-left: 2px;
}
.selecting {
  width: 115px;
}
.selecting .group-body {
  padding-left: 7px;
}
.big {
  display: flex;
  flex-direction: column;
  align-items: center;
  padding-top: 4px;
  text-align: center;
  line-height: 13px;
  white-space: nowrap;
}
.big > svg {
  margin-left: 1px;
}
.big > span {
  margin-top: 4px;
  letter-spacing: -0.3px;
}
.big span svg {
  display: inline-block;
  vertical-align: 2px;
}
.off {
  color: #7f8183;
}
.pin-btn {
  width: 70px;
}
.copy-btn {
  width: 38px;
}
.paste-btn {
  width: 46px;
}
.move-btn {
  width: 42px;
}
.delete-btn {
  width: 45px;
}
.rename-btn {
  width: 44px;
}
.prop-btn {
  width: 60px;
}
.inner-line {
  width: 1px;
  height: 58px;
  margin: 4px 1px 0 5px;
  background: #e0e1e3;
}
.smalls {
  padding-left: 3px;
}
.small {
  height: 22px;
  display: flex;
  align-items: center;
  gap: 4px;
  white-space: nowrap;
  letter-spacing: -0.32px;
}
.small span {
  padding-bottom: 2px;
}
.small .arrow {
  margin-left: 1px;
}
.new .small,
.opening .small,
.selecting .small {
  gap: 3px;
}
.new .smalls {
  padding-left: 4px;
}
.opening .smalls {
  padding-left: 2px;
}
.selecting .smalls {
  padding-left: 0;
}

.address-row {
  height: 35px;
  display: flex;
  padding-top: 6px;
}
.nav-arrows {
  width: 106px;
  height: 22px;
  display: flex;
  align-items: center;
  padding-left: 13px;
  gap: 16px;
}
.nav-arrows svg:nth-child(3) {
  margin-left: -2px;
}
.nav-arrows svg:nth-child(4) {
  margin-left: -5px;
}
.address {
  width: 791px;
  height: 22px;
  border: 1px solid #d9d9d9;
  display: flex;
  align-items: center;
  white-space: nowrap;
}
.addr-icon {
  margin: 0 6px 0 2px;
}
.address span {
  margin-left: 9px;
  padding-bottom: 2px;
}
.c1 { width: 47px; }
.c2 { width: 83px; }
.c3 { width: 36px; }
.c4 { width: 42px; }
.c5 { width: 67px; }
.addr-drop {
  margin-left: auto;
}
.address .refresh {
  width: 17px;
  height: 20px;
  margin-left: 2px;
  border-left: 1px solid #d9d9d9;
  display: flex;
  align-items: center;
  justify-content: center;
}
.search {
  width: 202px;
  height: 22px;
  margin-left: 12px;
  padding: 0 8px;
  border: 1px solid #d9d9d9;
  display: flex;
  align-items: center;
  justify-content: space-between;
  color: #6d6d6d;
}
.search span {
  padding-bottom: 2px;
}

.content {
  height: 385px;
  display: flex;
}
.tree {
  width: 156px;
  display: flex;
}
.tree-list {
  width: 140px;
}
.node {
  height: 24px;
  display: flex;
  align-items: center;
  gap: 4px;
  width: 139px;
  overflow: hidden;
  white-space: nowrap;
}
.node span {
  padding-bottom: 2px;
}
.l1 { padding-left: 40px; }
.l2 { padding-left: 49px; }
.l3 { padding-left: 57px; }
.l4 { padding-left: 64px; }
.l1,
.l4 {
  gap: 5px;
}
.faded svg {
  opacity: 0.55;
}
.current {
  background: #d9d9d9;
}
.tree-scroll {
  width: 15px;
  background: #f0f0f0;
  display: flex;
  flex-direction: column;
  align-items: center;
  padding: 6px 0 3px;
}
.tree-thumb {
  width: 15px;
  height: 74px;
  margin: 154px 0 auto;
  background: #cdcdcd;
}
.files {
  flex: 1;
  padding-left: 14px;
}
.columns {
  display: flex;
  height: 26px;
  line-height: 25px;
  color: #4c607a;
}
.col {
  border-right: 1px solid #e5e5e5;
  padding-left: 6px;
}
.col.name {
  width: 262px;
  padding-left: 7px;
}
.col.date {
  width: 144px;
  position: relative;
}
.col.type {
  width: 120px;
}
.col.size {
  width: 80px;
}
.sort {
  position: absolute;
  left: 68px;
  top: 0;
}
.heading {
  display: flex;
  align-items: center;
  height: 26px;
  margin-left: -4px;
  padding-right: 8px;
  font-size: 14.5px;
  letter-spacing: -0.1px;
  color: #2a3f8f;
}
.heading span {
  margin: 0 6px 0 5px;
}
.heading hr {
  flex: 1;
  border: 0;
  border-top: 1px solid #dfe0e2;
  margin: 0;
}
.heading.first {
  margin-top: 4px;
}
.heading.first + .row {
  margin-top: 3px;
}
.heading.second {
  margin: 2px 0 3px -4px;
}
.row {
  height: 21px;
  padding-left: 8px;
  display: flex;
  align-items: center;
  white-space: nowrap;
  color: #6d6d6d;
  letter-spacing: -0.27px;
}
.row.selected {
  width: 640px;
  height: 22px;
  margin-left: 4px;
  padding-left: 3px;
  background: #cce8ff;
  border: 1px solid #99d1ff;
}
.row.selected span {
  padding-bottom: 2px;
}
.fname {
  width: 240px;
  margin-left: 4px;
  color: #111;
}
.fdate {
  width: 144px;
}
.status {
  height: 26px;
  padding-left: 14px;
  display: flex;
  align-items: center;
  white-space: nowrap;
  color: #26396a;
}
.count {
  width: 59px;
}
.picked {
  width: 85px;
  letter-spacing: -0.25px;
}
.view-modes {
  margin-left: auto;
  padding-right: 9px;
  display: flex;
  align-items: center;
  gap: 4px;
}

/* context menu */
.menu {
  position: absolute;
  left: 842px;
  top: 309px;
  width: 246px;
  height: 419px;
  padding: 4px 2px;
  background: #eee;
  border: 1px solid #a0a0a0;
}
.item {
  height: 22px;
  padding-left: 8px;
  display: flex;
  align-items: center;
  color: #111;
}
.item span {
  margin-left: 24px;
  padding-bottom: 2px;
}
.item > svg + span {
  margin-left: 8px;
}
.item.hover {
  background: #fff;
}
.item.bold {
  font-weight: bold;
}
.item .more {
  margin: 0 8px 0 auto;
}
.menu hr {
  margin: 3px 8px;
  border: 0;
  border-top: 1px solid #919191;
}
.watermark {
  position: absolute;
  left: 1118px;
  top: 655px;
}
```
